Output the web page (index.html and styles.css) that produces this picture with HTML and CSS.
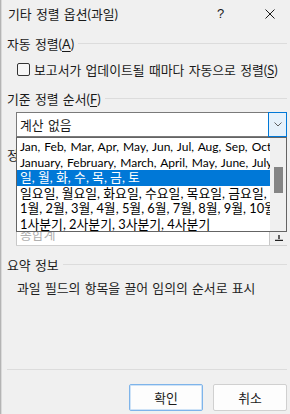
FILE: index.html
```html
<!DOCTYPE html>
<html lang="ko">
<head>
    <meta charset="UTF-8">
    <meta name="viewport" content="width=device-width, initial-scale=1.0">
    <title>기타 정렬 옵션(과일)</title>
    <link rel="stylesheet" href="styles.css">
</head>
<body>
    <div class="dialog">
        <div class="titlebar">
            <span class="title">기타 정렬 옵션(과일)</span>
            <span class="help">?</span>
            <span class="close">
                <svg width="10" height="10" viewBox="0 0 10 10">
                    <path d="M0.5 0.5 L9.5 9.5 M9.5 0.5 L0.5 9.5" stroke="#1a1a1a" stroke-width="1"/>
                </svg>
            </span>
        </div>

        <div class="section-title"><span>자동 정렬(<u>A</u>)</span></div>
        <label class="check-row">
            <span class="checkbox"></span>
            <span>보고서가 업데이트될 때마다 자동으로 정렬(<u>S</u>)</span>
        </label>

        <div class="section-title second"><span>기준 정렬 순서(<u>F</u>)</span></div>
        <div class="combo-wrap">
            <div class="combo">
                <span class="combo-text">계산 없음</span>
                <span class="combo-btn">
                    <svg width="8" height="5" viewBox="0 0 8 5">
                        <path d="M0.5 0.5 L4 4 L7.5 0.5" fill="none" stroke="#606060" stroke-width="1"/>
                    </svg>
                </span>
            </div>

            <!-- open drop-down list, lies over the fields below -->
            <div class="dropdown">
                <div class="dropdown-items">
                    <div class="item latin">Jan, Feb, Mar, Apr, May, Jun, Jul, Aug, Sep, Oct</div>
                    <div class="item latin">January, February, March, April, May, June, July</div>
                    <div class="item selected">일, 월, 화, 수, 목, 금, 토</div>
                    <div class="item">일요일, 월요일, 화요일, 수요일, 목요일, 금요일,</div>
                    <div class="item">1월, 2월, 3월, 4월, 5월, 6월, 7월, 8월, 9월, 10월,</div>
                    <div class="item">1사분기, 2사분기, 3사분기, 4사분기</div>
                </div>
                <div class="scrollbar">
                    <div class="thumb"></div>
                </div>
            </div>
        </div>

        <div class="sub-label">정렬 기준(<u>B</u>)</div>
        <div class="listbox">
            <div class="listbox-body">
                <span class="dim">총합계</span>
            </div>
            <div class="listbox-side">
                <svg width="8" height="6" viewBox="0 0 8 6">
                    <path d="M4 0 V4 M0 5.5 H8" stroke="#222" stroke-width="1.4"/>
                </svg>
            </div>
        </div>

        <div class="section-title third"><span>요약 정보</span></div>
        <div class="summary">과일 필드의 항목을 끌어 임의의 순서로 표시</div>

        <div class="footer">
            <button class="btn primary">확인</button>
            <button class="btn">취소</button>
        </div>
    </div>
</body>
</html>
```

FILE: styles.css
```css
body {
    margin: 0;
    background: #f0f0f0;
    font-family: Lato, "Noto Sans CJK KR", sans-serif;
    font-size: 12.85px;
    word-spacing: 1px;
    color: #1a1a1a;
}

u {
    text-decoration-thickness: 1px;
    text-underline-offset: 2px;
}

.dialog {
    height: 414px;
    box-sizing: border-box;
    display: flex;
    flex-direction: column;
    border-left: 1px solid #b4b4b4;
    box-shadow: inset 1px 0 0 #dadada;
    padding: 0 3px 0 6px;
}

.titlebar {
    height: 27px;
    display: flex;
    align-items: center;
    padding-left: 1px;
}

.title {
    flex: 1;
}

.help {
    width: 12px;
    margin-right: 36px;
    font-family: "Liberation Sans", sans-serif;
    font-size: 13px;
}

.close {
    display: flex;
    margin-right: 12px;
}

.section-title {
    display: flex;
    align-items: center;
    height: 16px;
    margin-top: 8px;
    white-space: nowrap;
}

.section-title::after {
    content: "";
    flex: 1;
    height: 1px;
    background: #dcdcdc;
    margin-left: 4px;
}

.section-title.second {
    margin-top: 13px;
}

.section-title.third {
    margin-top: 10px;
}

.check-row {
    display: flex;
    align-items: center;
    height: 15px;
    margin-top: 11px;
    padding-left: 10px;
    gap: 4px;
    white-space: nowrap;
}

.checkbox {
    width: 11px;
    height: 11px;
    border: 1px solid #333;
    border-radius: 2px;
    background: #f6f6f6;
}

.combo-wrap {
    position: relative;
    margin: 6px 0 0 9px;
}

.combo {
    height: 25px;
    box-sizing: border-box;
    display: flex;
    align-items: stretch;
    background: #fff;
    border: 1px solid #7a7a7a;
    border-right: none;
}

.combo-text {
    flex: 1;
    display: flex;
    align-items: center;
    padding-left: 3px;
}

.combo-btn {
    width: 17px;
    display: flex;
    align-items: center;
    justify-content: center;
    background: #e5f1fb;
    border: 1px solid #0078d7;
    margin: -1px 0;
}

.dropdown {
    position: absolute;
    top: 100%;
    left: 0;
    right: 0;
    height: 95px;
    box-sizing: border-box;
    display: flex;
    background: #fff;
    border: 1px solid #646464;
    z-index: 2;
}

.dropdown-items {
    flex: 1;
    overflow: hidden;
    padding-top: 1px;
}

.item {
    height: 15.5px;
    line-height: 15.5px;
    padding-left: 3px;
    white-space: nowrap;
    overflow: hidden;
    word-spacing: 0;
    color: #000;
}

.item.latin {
    font-size: 12px;
    word-spacing: 1px;
}

.item.selected {
    background: #0078d7;
    color: #fff;
}

.scrollbar {
    width: 16px;
    background: #f0f0f0;
    padding-top: 29px;
    display: flex;
    justify-content: center;
}

.thumb {
    width: 9px;
    height: 26px;
    background: #858585;
}

.sub-label {
    height: 16px;
    line-height: 16px;
    margin-top: 10px;
}

.listbox {
    height: 80px;
    margin: 2px 0 0 9px;
    display: flex;
    border-bottom: 1px solid #d0d0d0;
}

.listbox-body {
    flex: 1;
    background: #fff;
    border: 1px solid #c8c8c8;
    border-bottom: none;
    display: flex;
    align-items: flex-end;
    padding: 0 0 2px 3px;
}

.dim {
    color: #b0b0b0;
}

.listbox-side {
    width: 17px;
    background: #f0f0f0;
    display: flex;
    align-items: flex-end;
    justify-content: center;
    padding-bottom: 4px;
}

.summary {
    height: 16px;
    line-height: 16px;
    margin-top: 8px;
    padding-left: 10px;
    color: #222;
}

.footer {
    margin-top: auto;
    border-top: 1px solid #dcdcdc;
    padding: 14px 0 3px;
    display: flex;
    justify-content: flex-end;
    gap: 10px;
}

.btn {
    width: 74px;
    height: 27px;
    font-family: inherit;
    font-size: 12.85px;
    color: #1a1a1a;
    background: #fdfdfd;
    border: 1px solid #d0d0d0;
    border-radius: 2px;
    padding: 0;
}

.btn.primary {
    border-color: #7eb4ea;
    box-shadow: inset 0 0 0 1px #cfe3f7;
}
```
